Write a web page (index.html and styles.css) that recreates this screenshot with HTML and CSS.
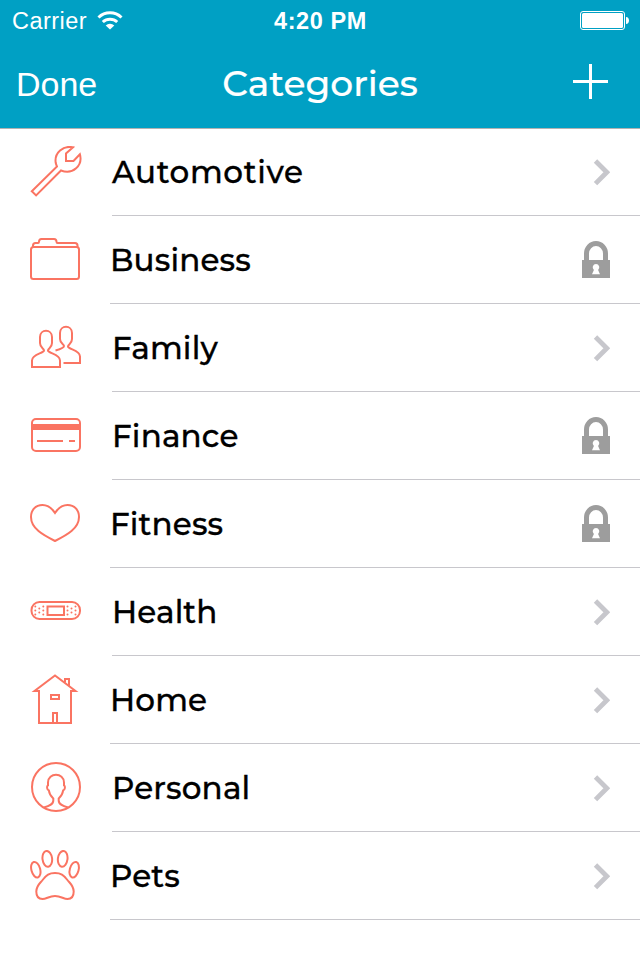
FILE: index.html
```html
<!DOCTYPE html>
<html lang="en">
<head>
  <meta charset="UTF-8">
  <meta name="viewport" content="width=device-width, initial-scale=1.0">
  <title>Categories</title>
  <link rel="stylesheet" href="styles.css">
</head>
<body>

<header class="header">
  <!-- Status bar -->
  <div class="status-bar">
    <div class="carrier">
      <span>Carrier</span>
      <svg class="wifi" width="26" height="20" viewBox="0 0 26 20">
        <path d="M1.500 6.500a16.500 16.500 0 0 1 23 0M5.800 11a10.500 10.500 0 0 1 14.400 0" fill="none" stroke="#fff" stroke-width="3"/>
        <path d="M13 18.600l-4.300-4.200a6.200 6.200 0 0 1 8.600 0z" fill="#fff"/>
      </svg>
    </div>
    <span class="time">4:20 PM</span>
    <svg class="battery" width="49" height="20" viewBox="0 0 49 20">
      <rect x=".5" y=".5" width="44" height="18" rx="2.500" fill="none" stroke="#fff"/>
      <rect x="2" y="2" width="41" height="15" rx="1.500" fill="#fff"/>
      <path d="M46 6c4 0 4 7 0 7z" fill="#fff"/>
    </svg>
  </div>

  <!-- Navigation bar -->
  <nav class="nav-bar">
    <a class="done">Done</a>
    <h1>Categories</h1>
    <svg class="add" width="36" height="36" viewBox="0 0 36 36">
      <path d="M0 17.500h35M17.500 0v35" stroke="#fff" stroke-width="3"/>
    </svg>
  </nav>
</header>

<svg class="symbols">
  <symbol id="chevron" viewBox="0 0 28 38">
    <path d="M13.500 8l11.300 11.300-11.300 11.300" fill="none" stroke="#c7c7cc" stroke-width="4.800"/>
  </symbol>
  <symbol id="lock" viewBox="0 0 28 38">
    <path d="M4.500 20v-7.500a9.500 10 0 0 1 19 0V20" fill="none" stroke="#9d9d9d" stroke-width="5"/>
    <path fill="#9d9d9d" fill-rule="evenodd" d="M0 19h28v18H0zM14 23a3.400 3.400 0 0 0-2.100 6l-1.900 4.300h8l-1.900-4.300a3.400 3.400 0 0 0-2.100-6z"/>
  </symbol>
</svg>

<ul class="list">
  <li class="row">
    <svg class="icon" viewBox="0 0 52 52">
      <path d="M43 1.300C33-.8 24.200 7 25.700 16.800c.3 1.600 1 2.800 1.300 3.700L1.800 45.200l4.300 4.200L31 24.500c12 4.500 22-5 18.900-16.300L43.500 15H36V7.500z"/>
    </svg>
    <div class="cell">
      <span class="label wide">Automotive</span>
      <svg class="accessory"><use href="#chevron"/></svg>
    </div>
  </li>
  <li class="row tight">
    <svg class="icon" viewBox="0 0 52 52">
      <rect x="1" y="13" width="48" height="32" rx="2.500"/>
      <path d="M3 13v-1.500Q3 9 5.500 9H8q1 0 1-1.200Q9 5 11.500 5H24q2.500 0 2.500 2.800Q26.500 9 27.500 9H45q2.500 0 2.500 2.500V13"/>
    </svg>
    <div class="cell">
      <span class="label">Business</span>
      <svg class="accessory"><use href="#lock"/></svg>
    </div>
  </li>
  <li class="row">
    <svg class="icon" viewBox="0 0 52 52">
      <path d="M2 45V38.500C2 32 13.500 31.500 14 28.500 14 26 10 26 10 21V15C10 6.800 22 6.800 22 15v6c0 5-4 5-4 7.500C18.500 31.500 30 32 30 38.500V45z"/>
      <path d="M25.500 28.500C31 27 34 26 34 24c0-2-4-2.500-4-7V11C30 2.800 42 2.800 42 11v6c0 5-4 5-4 7.500C38.500 27.500 50 28 50 34.500V41H33.500"/>
    </svg>
    <div class="cell">
      <span class="label">Family</span>
      <svg class="accessory"><use href="#chevron"/></svg>
    </div>
  </li>
  <li class="row">
    <svg class="icon" viewBox="0 0 52 52">
      <rect x="2" y="9" width="48" height="32" rx="4"/>
      <path d="M7 31h26M39 31h6"/>
      <path class="solid" d="M1 14h50v6H1z"/>
    </svg>
    <div class="cell">
      <span class="label">Finance</span>
      <svg class="accessory"><use href="#lock"/></svg>
    </div>
  </li>
  <li class="row tight">
    <svg class="icon" viewBox="0 0 52 52">
      <path d="M25 15C21.500 9.500 17.500 7 12.500 7 5.500 7 1 12 1 19c0 11.500 12 18 24 24 12-6 24-12.500 24-24C49 12 44.500 7 37.500 7 32.500 7 28.500 9.500 25 15z"/>
    </svg>
    <div class="cell">
      <span class="label">Fitness</span>
      <svg class="accessory"><use href="#lock"/></svg>
    </div>
  </li>
  <li class="row">
    <svg class="icon" viewBox="0 0 52 52">
      <rect x="1.500" y="16" width="48.500" height="17" rx="8"/>
      <rect x="17.500" y="20.500" width="16.500" height="8.500"/>
      <path class="dots" d="M5.300 20.500h0M5.300 24.500h0M5.300 28.500h0M9.300 22.500h0M9.300 26.500h0M13.300 20.500h0M13.300 24.500h0M13.300 28.500h0M37.500 20.500h0M37.500 24.500h0M37.500 28.500h0M41.500 22.500h0M41.500 26.500h0M45.500 20.500h0M45.500 24.500h0M45.500 28.500h0"/>
    </svg>
    <div class="cell">
      <span class="label">Health</span>
      <svg class="accessory"><use href="#chevron"/></svg>
    </div>
  </li>
  <li class="row tight">
    <svg class="icon" viewBox="0 0 52 52">
      <path d="M9 17H4.500L25 1.500 45.500 17H41v32H9z"/>
      <path d="M35 8.500V5h4v7M21 21h8v4h-8zM23 49V39h4v10"/>
    </svg>
    <div class="cell">
      <span class="label">Home</span>
      <svg class="accessory"><use href="#chevron"/></svg>
    </div>
  </li>
  <li class="row">
    <svg class="icon" viewBox="0 0 52 52">
      <circle cx="26" cy="25" r="24"/>
      <path d="M14 45.500C19 44 23.300 42.500 23.300 38.500v-2C21 34.500 19.300 32 18.900 28.500 16.800 28 16.500 24 18 23.300V20.500c0-10.300 16-10.300 16 0v2.800c1.500.7 1.200 4.700-.9 5.200C32.700 32 31 34.500 28.700 36.500v2C28.700 42.500 33 44 38 45.500"/>
    </svg>
    <div class="cell">
      <span class="label">Personal</span>
      <svg class="accessory"><use href="#chevron"/></svg>
    </div>
  </li>
  <li class="row tight">
    <svg class="icon" viewBox="0 0 52 52">
      <ellipse cx="17.300" cy="8.800" rx="4.800" ry="7.900" transform="rotate(-7 17.300 8.800)"/>
      <ellipse cx="32.700" cy="8.800" rx="4.800" ry="7.900" transform="rotate(7 32.700 8.800)"/>
      <ellipse cx="5.800" cy="19.700" rx="4.400" ry="8" transform="rotate(-15 5.800 19.700)"/>
      <ellipse cx="44.200" cy="19.700" rx="4.400" ry="8" transform="rotate(15 44.200 19.700)"/>
      <path d="M25 23c-6 0-8.500 2-12 6.500C10 33.500 6.300 35.500 6.300 41.500c0 5 2.700 7.500 6.200 7.500 4 0 6.500-3 12.500-3s8.500 3 12.500 3c3.500 0 6.200-2.500 6.200-7.500 0-6-3.700-8-6.700-12C33.500 25 31 23 25 23z"/>
    </svg>
    <div class="cell">
      <span class="label">Pets</span>
      <svg class="accessory"><use href="#chevron"/></svg>
    </div>
  </li>
</ul>

</body>
</html>
```
FILE: styles.css
```css
* {
  box-sizing: border-box;
}

body {
  margin: 0;
  background: #fff;
  color: #000;
  font-family: Montserrat, Inter, sans-serif;
}

.header {
  height: 128px;
  background: #00a0c4;
  color: #fff;
}

.status-bar {
  display: grid;
  grid-template-columns: 1fr auto 1fr;
  align-items: center;
  height: 41px;
  padding: 0 11px 0 12px;
  font-family: "Helvetica Neue", "Liberation Sans", sans-serif;
  font-size: 23.5px;
}

.carrier {
  display: flex;
  align-items: center;
  gap: 10px;
  padding-top: 1px;
  letter-spacing: 0.45px;
}

.time {
  padding-top: 1px;
  font-weight: 700;
  letter-spacing: 0.6px;
}

.battery {
  justify-self: end;
}

.nav-bar {
  display: grid;
  grid-template-columns: 1fr auto 1fr;
  align-items: center;
  height: 86px;
  padding: 0 31px 0 16px;
}

.done {
  font-family: "Helvetica Neue", "Liberation Sans", sans-serif;
  font-size: 34px;
}

.nav-bar h1 {
  margin: 0 0 2px 15px;
  font-size: 36px;
  font-weight: 500;
  -webkit-text-stroke: 0.2px #fff;
}

.add {
  justify-self: end;
  margin-bottom: 5px;
}

.symbols {
  display: none;
}

.list {
  margin: 0;
  padding: 0;
  list-style: none;
  box-shadow: inset 0 1px #b2b2b2;
}

.row {
  display: flex;
  align-items: center;
  gap: 30px;
  height: 88px;
  padding-left: 30px;
}

.row.tight {
  gap: 28px;
}

.icon {
  width: 52px;
  height: 52px;
  fill: none;
  stroke: #fa7462;
  stroke-width: 2;
}

.icon .solid {
  fill: #fa7462;
  stroke: none;
}

.icon .dots {
  stroke-linecap: round;
}

.cell {
  flex: 1;
  display: flex;
  align-items: center;
  justify-content: space-between;
  height: 88px;
  padding-right: 30px;
  border-bottom: 1px solid #c8c7cc;
}

.label {
  font-size: 31px;
  font-weight: 500;
  letter-spacing: 0.15px;
  -webkit-text-stroke: 0.3px #000;
}

.label.wide {
  letter-spacing: 0.65px;
}

.accessory {
  width: 28px;
  height: 38px;
}
```
